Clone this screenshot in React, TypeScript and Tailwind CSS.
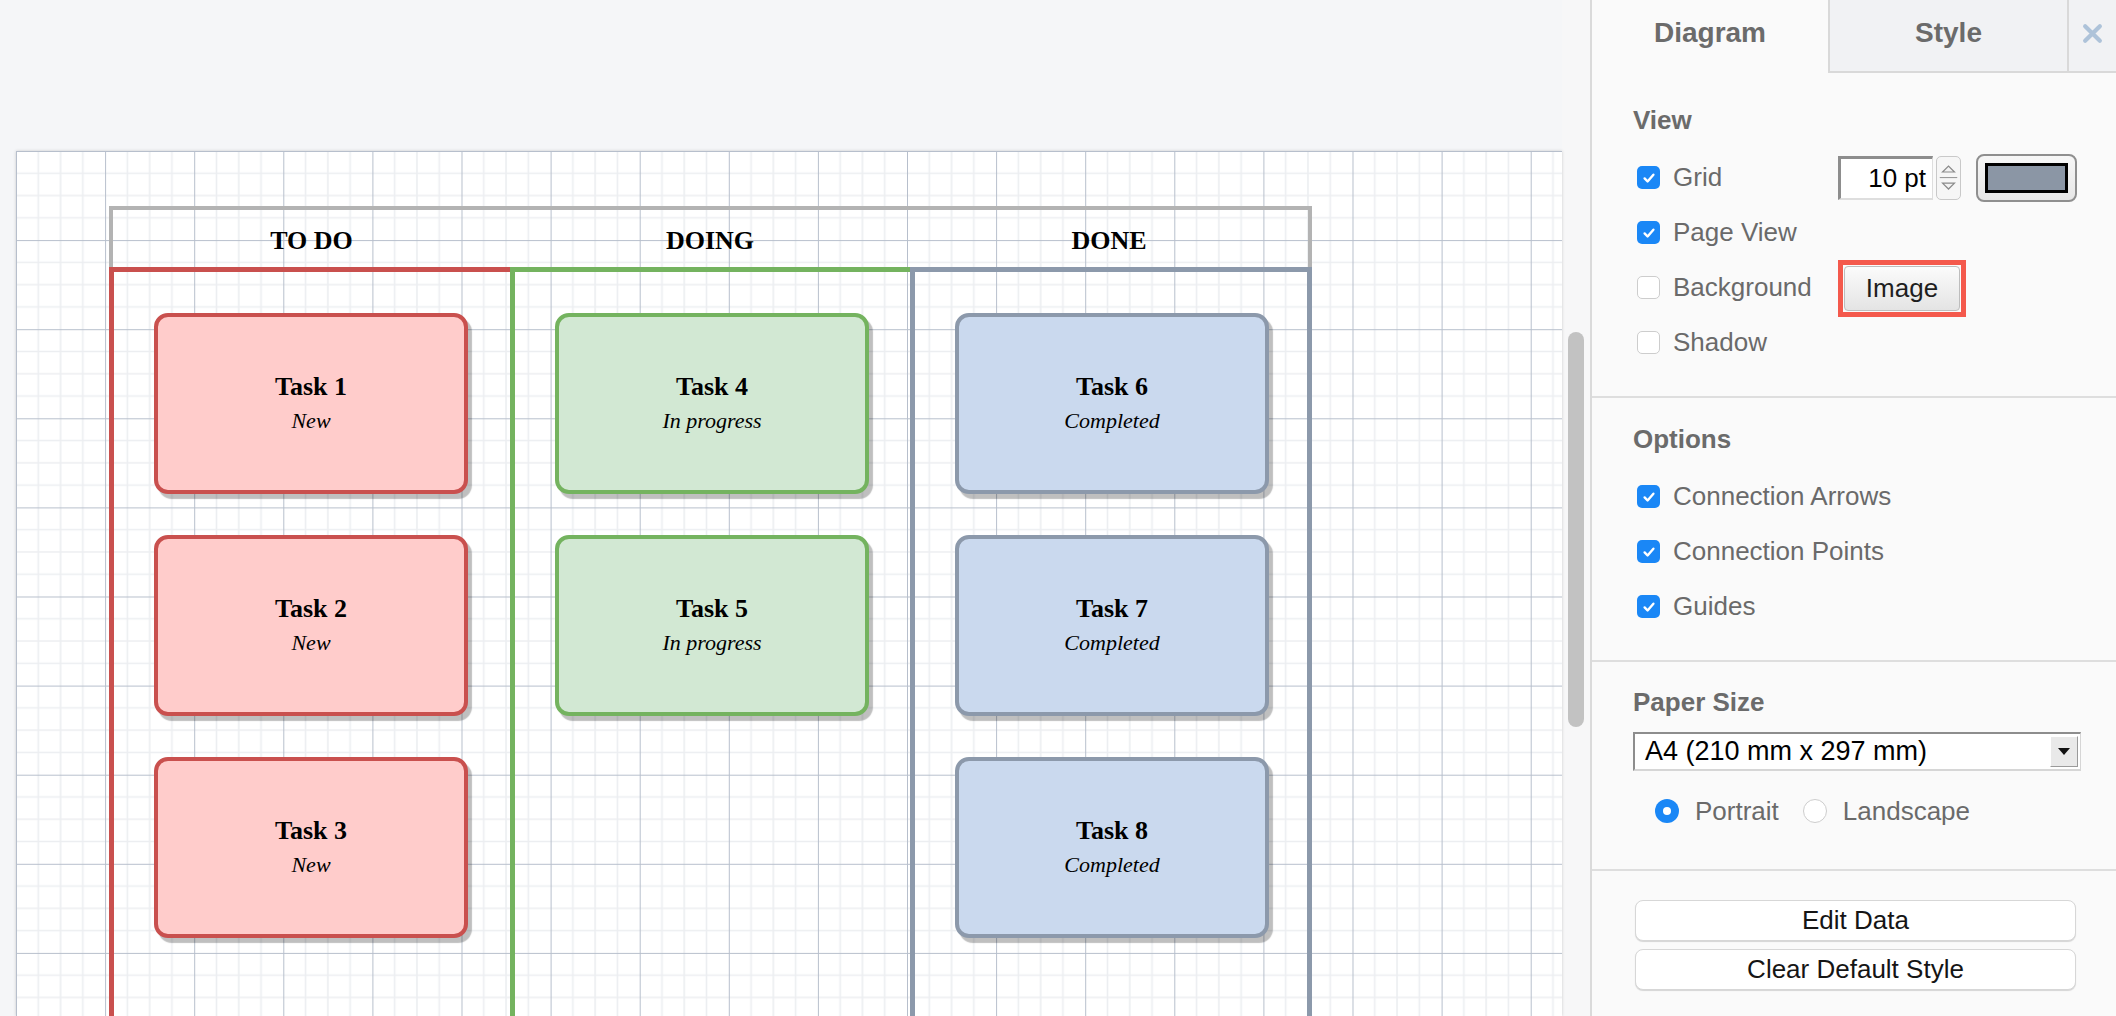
import React from "react";

type Card = { title: string; status: string };

const columns = [
  {
    id: "todo",
    title: "TO DO",
    headCls: "w-[397px]",
    colCls: "w-[401px] border-t-[5px] border-l-[5px] border-[#c9504e]",
    cardCls: "border-[#c9504e] bg-[#ffcccb]",
    cards: [
      { title: "Task 1", status: "New" },
      { title: "Task 2", status: "New" },
      { title: "Task 3", status: "New" },
    ] as Card[],
  },
  {
    id: "doing",
    title: "DOING",
    headCls: "w-[400px]",
    colCls: "w-[400px] border-t-[5px] border-l-[5px] border-[#74b35f]",
    cardCls: "border-[#74b35f] bg-[#d2e8d3]",
    cards: [
      { title: "Task 4", status: "In progress" },
      { title: "Task 5", status: "In progress" },
    ] as Card[],
  },
  {
    id: "done",
    title: "DONE",
    headCls: "w-[398px]",
    colCls: "w-[402px] border-t-[5px] border-x-[5px] border-[#8c99ab]",
    cardCls: "border-[#8c99ab] bg-[#cad9ee]",
    cards: [
      { title: "Task 6", status: "Completed" },
      { title: "Task 7", status: "Completed" },
      { title: "Task 8", status: "Completed" },
    ] as Card[],
  },
];

const GridBackdrop = () => (
  <svg className="absolute inset-0 h-full w-full" aria-hidden>
    <defs>
      <pattern id="grid" width="89.1" height="89.1" patternUnits="userSpaceOnUse">
        {[22.275, 44.55, 66.825].map((p) => (
          <g key={p} stroke="#eceef1" strokeWidth="1.6">
            <line x1={p} y1="0" x2={p} y2="89.1" />
            <line x1="0" y1={p} x2="89.1" y2={p} />
          </g>
        ))}
        <line x1="0.5" y1="0" x2="0.5" y2="89.1" stroke="#b7bfcc" strokeWidth="1" />
        <line x1="0" y1="0.5" x2="89.1" y2="0.5" stroke="#b7bfcc" strokeWidth="1" />
      </pattern>
    </defs>
    <rect width="100%" height="100%" fill="url(#grid)" />
  </svg>
);

const TaskCard = ({ card, cls }: { card: Card; cls: string }) => (
  <div
    className={`flex h-[181px] w-[314px] flex-col items-center justify-center gap-[5px] rounded-[14px] border-[4px] shadow-[4px_5px_1px_rgba(0,0,0,0.25)] ${cls}`}
  >
    <div className="text-[26px] font-bold leading-[30px] text-black">{card.title}</div>
    <div className="text-[22px] italic leading-[28px] text-black">{card.status}</div>
  </div>
);

const Check = ({ on }: { on: boolean }) =>
  on ? (
    <span className="flex h-[23px] w-[23px] shrink-0 items-center justify-center rounded-[5px] bg-[#1a87f6]">
      <svg viewBox="0 0 16 16" className="h-[16px] w-[16px]">
        <path d="M3.6 8.4l3 3.1 5.8-6.8" fill="none" stroke="white" strokeWidth="2.4" strokeLinecap="round" strokeLinejoin="round" />
      </svg>
    </span>
  ) : (
    <span className="h-[23px] w-[23px] shrink-0 rounded-[5px] border border-[#cdcdcd] bg-white" />
  );

const Row = ({ on, label, children }: { on: boolean; label: string; children?: React.ReactNode }) => (
  <div className="flex h-[55px] items-center">
    <div className="flex w-[205px] items-center gap-[13px] pl-[4px]">
      <Check on={on} />
      <span className="whitespace-nowrap text-[26px] text-[#6a6a6a]">{label}</span>
    </div>
    {children}
  </div>
);

const SectionTitle = ({ children }: { children: React.ReactNode }) => (
  <div className="h-[30px] text-[26px] font-bold leading-[30px] text-[#6b6b6b]">{children}</div>
);

export default function App() {
  return (
    <div className="flex h-[1016px] w-[2116px] overflow-hidden bg-[#f5f6f8] font-['Liberation_Sans',Arial,sans-serif]">
      {/* Canvas */}
      <div className="flex w-[1590px] shrink-0">
        <div className="w-[1562px] pl-[16px] pt-[151px]">
          <div className="relative h-full bg-white shadow-[0_0_3px_rgba(0,0,0,0.18)]">
            <GridBackdrop />
            <div className="relative pl-[93px] pt-[55px] font-['Liberation_Serif',serif]">
              {/* Header */}
              <div className="flex h-[61px] w-[1203px] border-x-4 border-t-4 border-[#b3b3b3] pt-[4px]">
                {columns.map((c) => (
                  <div key={c.id} className={`flex items-center justify-center text-[26px] font-bold text-black ${c.headCls}`}>
                    {c.title}
                  </div>
                ))}
              </div>
              {/* Lanes */}
              <div className="flex">
                {columns.map((c) => (
                  <div key={c.id} className={`flex h-[760px] flex-col gap-[41px] pl-[40px] pt-[41px] ${c.colCls}`}>
                    {c.cards.map((card) => (
                      <TaskCard key={card.title} card={card} cls={c.cardCls} />
                    ))}
                  </div>
                ))}
              </div>
            </div>
          </div>
        </div>
        <div className="flex w-[28px] justify-center bg-[#f7f7f8] pt-[332px]">
          <div className="h-[395px] w-[16px] rounded-full bg-[#c2c2c2]" />
        </div>
      </div>

      {/* Format panel */}
      <div className="flex w-[526px] shrink-0 flex-col border-l-2 border-[#dadada] bg-[#fafafa]">
        {/* Tabs */}
        <div className="flex h-[73px]">
          <div className="flex w-[236px] items-center justify-center pb-[8px] text-[28px] font-bold text-[#6b6b6b]">Diagram</div>
          <div className="flex w-[239px] items-center justify-center border-b-2 border-l-2 border-[#d9d9d9] bg-[#f1f2f4] pb-[6px] text-[28px] font-bold text-[#6b6b6b]">
            Style
          </div>
          <div className="flex flex-1 items-center justify-center border-b-2 border-l-2 border-[#d9d9d9] bg-[#f1f2f4] pb-[4px]">
            <svg viewBox="0 0 20 20" className="h-[21px] w-[21px]">
              <path d="M3 3l14 14M17 3L3 17" stroke="#aec3d9" strokeWidth="4" strokeLinecap="round" />
            </svg>
          </div>
        </div>

        {/* View */}
        <div className="border-b-2 border-[#dedede] pb-[26px] pl-[41px] pt-[32px]">
          <SectionTitle>View</SectionTitle>
          <div className="mt-[15px]">
            <Row on label="Grid">
              <div className="flex items-center">
                <div className="flex h-[44px] w-[95px] items-center justify-end border-b-2 border-l-[3px] border-r border-t-[3px] border-b-[#dedede] border-l-[#8d8d8d] border-r-[#dedede] border-t-[#8d8d8d] bg-white pr-[6px] text-[26px] text-black">
                  10 pt
                </div>
                <div className="ml-[3px] flex h-[44px] w-[25px] flex-col rounded-[5px] border border-[#c9c9c9] bg-[#f6f6f6]">
                  <svg viewBox="0 0 25 44" className="h-full w-full">
                    <path d="M6 15.5L12.5 9l6.5 6.5z" fill="#f2f2f2" stroke="#8a8a8a" strokeWidth="1.3" />
                    <line x1="3" y1="21.5" x2="22" y2="21.5" stroke="#9a9a9a" strokeWidth="1.2" />
                    <path d="M6 27.5L12.5 34l6.5-6.5z" fill="#f2f2f2" stroke="#8a8a8a" strokeWidth="1.3" />
                  </svg>
                </div>
                <div className="ml-[15px] flex h-[48px] w-[101px] items-center justify-center rounded-[8px] border-2 border-[#8f8f8f] bg-[linear-gradient(#f7f7f7,#e6e6e6)]">
                  <div className="h-[30px] w-[83px] border-[3px] border-black bg-[#8b96a5]" />
                </div>
              </div>
            </Row>
            <Row on label="Page View" />
            <Row on={false} label="Background">
              <div className="mt-[2px] border-[5px] border-[#f4594c] p-[1px]">
                <div className="flex h-[45px] w-[116px] items-center justify-center rounded-[4px] border border-[#bdbdbd] bg-[linear-gradient(#fbfbfb,#e4e4e4)] text-[26px] text-[#1e1e1e]">
                  Image
                </div>
              </div>
            </Row>
            <Row on={false} label="Shadow" />
          </div>
        </div>

        {/* Options */}
        <div className="border-b-2 border-[#dedede] pb-[26px] pl-[41px] pt-[26px]">
          <SectionTitle>Options</SectionTitle>
          <div className="mt-[15px]">
            <Row on label="Connection Arrows" />
            <Row on label="Connection Points" />
            <Row on label="Guides" />
          </div>
        </div>

        {/* Paper size */}
        <div className="border-b-2 border-[#dedede] pb-[38px] pl-[41px] pt-[25px]">
          <SectionTitle>Paper Size</SectionTitle>
          <div className="mt-[15px] flex h-[39px] w-[448px] items-center border-b-2 border-l-2 border-r border-t-2 border-b-[#d6d6d6] border-l-[#8d8d8d] border-r-[#d6d6d6] border-t-[#8d8d8d] bg-white">
            <span className="flex-1 whitespace-nowrap pl-[10px] text-[27px] text-black">A4 (210 mm x 297 mm)</span>
            <span className="mr-[2px] flex h-[31px] w-[28px] items-center justify-center border border-b-[#9a9a9a] border-l-[#ffffff] border-r-[#9a9a9a] border-t-[#ffffff] bg-[#e9e9e9]">
              <svg viewBox="0 0 12 8" className="h-[8px] w-[12px]">
                <path d="M0 0h12L6 7z" fill="#111" />
              </svg>
            </span>
          </div>
          <div className="mt-[20px] flex h-[40px] items-center pl-[22px] text-[26px] text-[#6a6a6a]">
            <span className="flex h-[24px] w-[24px] items-center justify-center rounded-full bg-[#1a87f6]">
              <span className="h-[8px] w-[8px] rounded-full bg-white" />
            </span>
            <span className="ml-[16px]">Portrait</span>
            <span className="ml-[24px] h-[24px] w-[24px] rounded-full border border-[#cdcdcd] bg-white" />
            <span className="ml-[16px]">Landscape</span>
          </div>
        </div>

        {/* Actions */}
        <div className="flex flex-col gap-[8px] pl-[43px] pt-[29px]">
          {["Edit Data", "Clear Default Style"].map((t) => (
            <div
              key={t}
              className="flex h-[41px] w-[441px] items-center justify-center rounded-[8px] border border-[#d7d7d7] bg-white text-[26px] text-[#151515] shadow-[0_1px_1px_rgba(0,0,0,0.15)]"
            >
              {t}
            </div>
          ))}
        </div>
      </div>
    </div>
  );
}
